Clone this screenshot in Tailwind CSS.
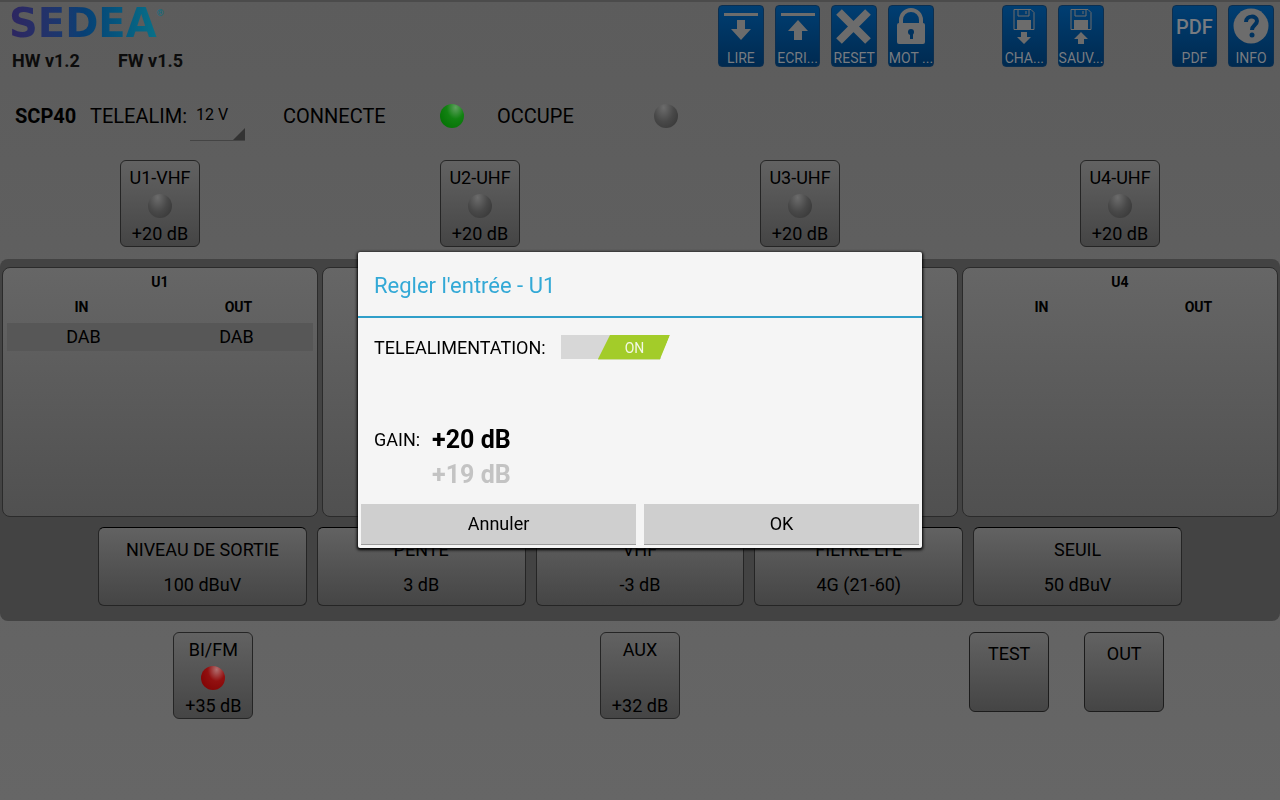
<!DOCTYPE html>
<html lang="fr">
<head>
    <meta charset="UTF-8">
    <meta name="viewport" content="width=device-width, initial-scale=1.0">
    <title>SEDEA SCP40</title>
    <script src="https://cdn.jsdelivr.net/npm/@tailwindcss/browser@4"></script>
</head>
<body class="min-h-screen bg-linear-to-b from-[#5c5c5c] to-[#666666] font-['Roboto',sans-serif] text-black">
    <!-- Header -->
    <header class="flex justify-between border-t-2 border-[#4b4b4b] pt-[3px] pr-[6px] pl-[9px]">
        <div>
            <div class="flex h-9 items-center">
                <span class="bg-linear-to-r from-[#2d2560] via-[#073f74] to-[#097088] bg-clip-text font-['DejaVu_Sans'] text-[40px] leading-9 font-bold text-transparent">SEDEA</span>
                <span class="self-start text-[9px] leading-4 text-[#097088]">®</span>
            </div>
            <div class="flex gap-[38px] pt-2 pl-[3px] text-lg leading-6 font-bold text-[#0c0c0c]">
                <span>HW v1.2</span>
                <span>FW v1.5</span>
            </div>
        </div>
        <nav class="grid h-[62px] w-[556px] grid-cols-10 gap-[11px] text-sm leading-4 text-[#777b80]">
            <button class="flex flex-col items-center justify-between rounded-sm border border-[#0c2f50] bg-linear-to-b from-[#003e72] to-[#002a50]">
                <svg class="h-11 w-11" viewBox="0 0 44 44" fill="#6c6c6c"><path d="M5 7h34v3H5zM18 14h8v9h6L22 34 12 23h6z"/></svg>
                <span>LIRE</span>
            </button>
            <button class="flex flex-col items-center justify-between rounded-sm border border-[#0c2f50] bg-linear-to-b from-[#003e72] to-[#002a50]">
                <svg class="h-11 w-11" viewBox="0 0 44 44" fill="#6c6c6c"><path d="M5 7h34v3H5zM18 34h8v-9h6L22 14 12 25h6z"/></svg>
                <span>ECRI...</span>
            </button>
            <button class="flex flex-col items-center justify-between rounded-sm border border-[#0c2f50] bg-linear-to-b from-[#003e72] to-[#002a50]">
                <svg class="h-11 w-11" viewBox="0 0 44 44" stroke="#6c6c6c" stroke-width="8"><path d="M7 6l29 29M36 6L7 35"/></svg>
                <span>RESET</span>
            </button>
            <button class="flex flex-col items-center justify-between rounded-sm border border-[#0c2f50] bg-linear-to-b from-[#003e72] to-[#002a50]">
                <svg class="h-11 w-11" viewBox="0 0 44 44"><path d="M12 19v-5a10 10 0 0 1 20 0v5" fill="none" stroke="#6c6c6c" stroke-width="4"/><rect x="8" y="17" width="28" height="21" rx="2" fill="#6c6c6c"/><circle cx="22" cy="26" r="3" fill="#00325e"/><path d="M21 27h3v6h-3z" fill="#00325e"/></svg>
                <span class="whitespace-nowrap">MOT ...</span>
            </button>
            <button class="col-start-6 flex flex-col items-center justify-between rounded-sm border border-[#0c2f50] bg-linear-to-b from-[#003e72] to-[#002a50]">
                <svg class="h-11 w-11" viewBox="0 0 44 44" fill="#6c6c6c"><path d="M12 3.500h17l3 3v17H12zM16 4v6h11V4M24 5v3" fill="none" stroke="#6c6c6c"/><path d="M15 14h14v9H15zM19 26h6v5h4l-7 7-7-7h4z"/></svg>
                <span>CHA...</span>
            </button>
            <button class="flex flex-col items-center justify-between rounded-sm border border-[#0c2f50] bg-linear-to-b from-[#003e72] to-[#002a50]">
                <svg class="h-11 w-11" viewBox="0 0 44 44" fill="#6c6c6c"><path d="M12 3.500h17l3 3v17H12zM16 4v6h11V4M24 5v3" fill="none" stroke="#6c6c6c"/><path d="M15 14h14v9H15zM19 38h6v-5h4l-7-7-7 7h4z"/></svg>
                <span>SAUV...</span>
            </button>
            <button class="col-start-9 flex flex-col items-center justify-between rounded-sm border border-[#0c2f50] bg-linear-to-b from-[#003e72] to-[#002a50]">
                <span class="pt-[11px] text-xl leading-5 font-medium">PDF</span>
                <span>PDF</span>
            </button>
            <button class="flex flex-col items-center justify-between rounded-sm border border-[#0c2f50] bg-linear-to-b from-[#003e72] to-[#002a50]">
                <svg class="h-11 w-11" viewBox="0 0 44 44"><circle cx="22" cy="20" r="17.500" fill="#6c6c6c"/><path d="M17 16c0-7 11-7 11-1 0 4-5 4-5 9" fill="none" stroke="#00325e" stroke-width="4"/><circle cx="23" cy="29" r="2.500" fill="#00325e"/></svg>
                <span>INFO</span>
            </button>
        </nav>
    </header>

    <!-- Status -->
    <section class="flex h-[87px] items-center pb-0.5 pl-[15px] text-xl">
        <strong class="w-[75px]">SCP40</strong>
        <label for="telealim" class="w-[100px]">TELEALIM:</label>
        <span class="relative mt-3 block w-[55px] border-b border-[#444444]">
            <select id="telealim" class="block h-[38px] w-full appearance-none pb-3 pl-1.5 text-base outline-none">
                <option>12 V</option>
                <option>24 V</option>
            </select>
            <svg class="pointer-events-none absolute right-0 bottom-0 h-3 w-3" viewBox="0 0 12 12"><path d="M12 0v12H0z" fill="#333333"/></svg>
        </span>
        <span class="ml-[38px] w-[157px]">CONNECTE</span>
        <span class="size-6 rounded-full bg-radial-[at_65%_15%] from-[#5fa05f] via-[#128212] via-40% to-[#006c00]"></span>
        <span class="ml-[33px] w-[157px]">OCCUPE</span>
        <span class="size-6 rounded-full bg-radial-[at_40%_15%] from-[#6c6c6c] via-[#484848] via-50% to-[#333333]"></span>
    </section>

    <!-- Inputs -->
    <section class="grid grid-cols-4 justify-items-center text-lg leading-6">
        <button class="flex h-[87px] w-20 flex-col items-center justify-between rounded-md border border-[#252525] bg-linear-to-b from-[#626262] to-[#454545] pt-[5px]">
            U1-VHF
            <span class="size-6 rounded-full bg-radial-[at_40%_15%] from-[#6c6c6c] via-[#484848] via-50% to-[#333333]"></span>
            <span>+20 dB</span>
        </button>
        <button class="flex h-[87px] w-20 flex-col items-center justify-between rounded-md border border-[#252525] bg-linear-to-b from-[#626262] to-[#454545] pt-[5px]">
            U2-UHF
            <span class="size-6 rounded-full bg-radial-[at_40%_15%] from-[#6c6c6c] via-[#484848] via-50% to-[#333333]"></span>
            <span>+20 dB</span>
        </button>
        <button class="flex h-[87px] w-20 flex-col items-center justify-between rounded-md border border-[#252525] bg-linear-to-b from-[#626262] to-[#454545] pt-[5px]">
            U3-UHF
            <span class="size-6 rounded-full bg-radial-[at_40%_15%] from-[#6c6c6c] via-[#484848] via-50% to-[#333333]"></span>
            <span>+20 dB</span>
        </button>
        <button class="flex h-[87px] w-20 flex-col items-center justify-between rounded-md border border-[#252525] bg-linear-to-b from-[#626262] to-[#454545] pt-[5px]">
            U4-UHF
            <span class="size-6 rounded-full bg-radial-[at_40%_15%] from-[#6c6c6c] via-[#484848] via-50% to-[#333333]"></span>
            <span>+20 dB</span>
        </button>
    </section>

    <!-- Filters -->
    <main class="mt-3 rounded-lg bg-[#434343] pt-2 pb-[15px]">
        <div class="grid grid-cols-4 gap-1 px-0.5">
            <div class="h-[250px] rounded-lg border border-[#2b2b2b] bg-linear-to-b from-[#666666] to-[#505050] px-1 pt-0.5">
                <table class="w-full table-fixed text-center text-sm">
                    <caption class="py-0.5 font-bold">U1</caption>
                    <thead><tr class="h-[29px]"><th class="pr-1 pb-1">IN</th><th class="pb-1 pl-1">OUT</th></tr></thead>
                    <tbody><tr class="h-7 bg-[#575757] text-lg leading-7"><td>DAB</td><td>DAB</td></tr></tbody>
                </table>
            </div>
            <div class="h-[250px] rounded-lg border border-[#2b2b2b] bg-linear-to-b from-[#666666] to-[#505050] px-1 pt-0.5">
                <table class="w-full table-fixed text-center text-sm">
                    <thead><tr class="h-[29px]"><th class="pr-1 pb-1"></th><th class="pb-1 pl-1"></th></tr></thead>
                </table>
            </div>
            <div class="h-[250px] rounded-lg border border-[#2b2b2b] bg-linear-to-b from-[#666666] to-[#505050] px-1 pt-0.5">
                <table class="w-full table-fixed text-center text-sm">
                    <thead><tr class="h-[29px]"><th class="pr-1 pb-1"></th><th class="pb-1 pl-1"></th></tr></thead>
                </table>
            </div>
            <div class="h-[250px] rounded-lg border border-[#2b2b2b] bg-linear-to-b from-[#666666] to-[#505050] px-1 pt-0.5">
                <table class="w-full table-fixed text-center text-sm">
                    <caption class="py-0.5 font-bold">U4</caption>
                    <thead><tr class="h-[29px]"><th class="pr-1 pb-1">IN</th><th class="pb-1 pl-1">OUT</th></tr></thead>
                </table>
            </div>
        </div>
        <div class="mt-2.5 grid grid-cols-5 gap-2.5 px-[98px] text-lg leading-[35px]">
            <button class="flex h-[79px] flex-col items-center rounded-md border border-[#252525] border-t-black bg-linear-to-b from-[#626262] to-[#454545] pt-1">NIVEAU DE SORTIE<span>100 dBuV</span></button>
            <button class="flex h-[79px] flex-col items-center rounded-md border border-[#252525] border-t-black bg-linear-to-b from-[#626262] to-[#454545] pt-1">PENTE<span>3 dB</span></button>
            <button class="flex h-[79px] flex-col items-center rounded-md border border-[#252525] border-t-black bg-linear-to-b from-[#626262] to-[#454545] pt-1">VHF<span>-3 dB</span></button>
            <button class="flex h-[79px] flex-col items-center rounded-md border border-[#252525] border-t-black bg-linear-to-b from-[#626262] to-[#454545] pt-1">FILTRE LTE<span>4G (21-60)</span></button>
            <button class="flex h-[79px] flex-col items-center rounded-md border border-[#252525] border-t-black bg-linear-to-b from-[#626262] to-[#454545] pt-1">SEUIL<span>50 dBuV</span></button>
        </div>
    </main>

    <!-- Auxiliary inputs -->
    <section class="mt-[11px] grid grid-cols-3 justify-items-center text-lg leading-6">
        <button class="flex h-[87px] w-20 flex-col items-center justify-between rounded-md border border-[#252525] bg-linear-to-b from-[#626262] to-[#454545] pt-[5px]">
            BI/FM
            <span class="size-6 rounded-full bg-radial-[at_65%_15%] from-[#b07070] via-[#921010] via-40% to-[#7c0000]"></span>
            <span>+35 dB</span>
        </button>
        <button class="flex h-[87px] w-20 flex-col items-center justify-between rounded-md border border-[#252525] bg-linear-to-b from-[#626262] to-[#454545] pt-[5px]">
            AUX
            <span>+32 dB</span>
        </button>
        <div class="flex gap-[35px]">
            <button class="flex h-20 w-20 justify-center rounded-md border border-[#1c1c1c] bg-linear-to-b from-[#626262] to-[#454545] pt-[9px]">TEST</button>
            <button class="flex h-20 w-20 justify-center rounded-md border border-[#1c1c1c] bg-linear-to-b from-[#626262] to-[#454545] pt-[9px]">OUT</button>
        </div>
    </section>

    <!-- Input dialog -->
    <div class="fixed inset-0 flex items-center justify-center">
        <div role="dialog" aria-labelledby="dialogTitle" class="w-[564px] rounded-xs bg-[#f5f5f5] shadow-[0_1px_3px_1px_#000000]">
            <h2 id="dialogTitle" class="border-b-2 border-[#2f9fc9] px-4 pt-[18px] pb-3.5 text-[22px] leading-8 text-[#33a9d6]">Regler l'entrée - U1</h2>
            <div class="px-4 pt-4 text-lg leading-7">
                <label class="flex items-center gap-[15px]">
                    TELEALIMENTATION:
                    <input type="checkbox" checked class="peer sr-only">
                    <span class="relative block h-[26px] w-[109px]">
                        <svg class="h-full w-full" viewBox="0 0 109 26"><path d="M0 0h100v24H0z" fill="#d7d7d7"/><path d="M49 0h60L99 24H37z" fill="#a3cc29"/><path d="M100 24l9-24v24z" fill="#f5f5f5"/><path d="M37 24h62v1H37z" fill="#cfdfa0"/></svg>
                        <span class="absolute inset-y-0 left-16 text-sm leading-[26px] text-[#f3f8e4]">ON</span>
                    </span>
                </label>
                <div class="flex gap-3 pt-[60px] pb-3">
                    <label for="gain" class="leading-[35px]">GAIN:</label>
                    <div class="flex flex-col items-start text-[25px] leading-[35px] font-bold">
                        <input id="gain" type="text" value="+20 dB" class="h-[35px] w-24 outline-none">
                        <button class="text-[#c3c3c3]">+19 dB</button>
                    </div>
                </div>
            </div>
            <div class="grid grid-cols-2 gap-2 px-[3px] pb-[3px] text-lg">
                <button class="h-[41px] border-b border-[#9c9c9c] bg-[#cfcfcf]">Annuler</button>
                <button class="h-[41px] border-b border-[#9c9c9c] bg-[#cfcfcf]">OK</button>
            </div>
        </div>
    </div>
</body>
</html>
